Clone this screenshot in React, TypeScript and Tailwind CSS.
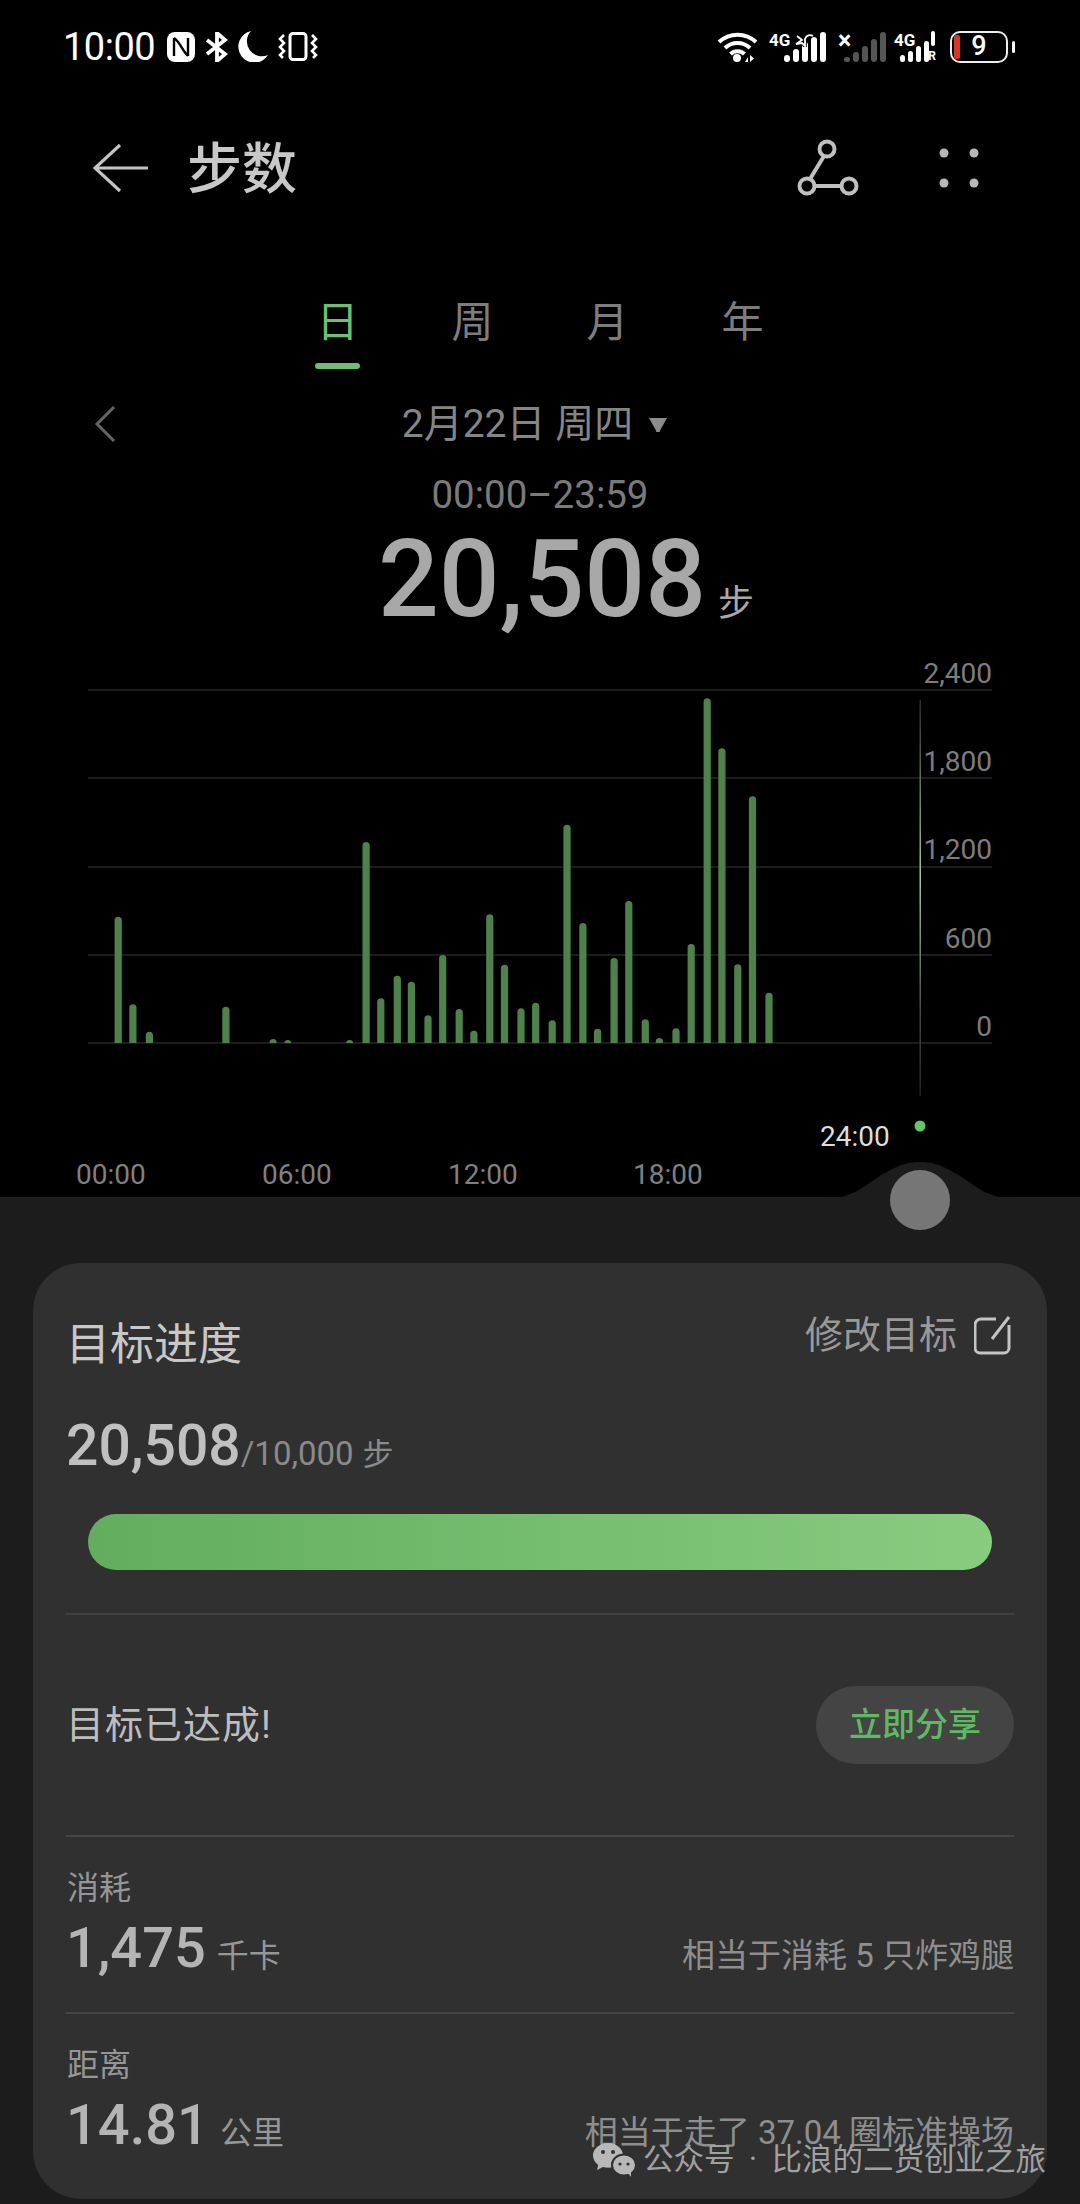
const bars: [number, number][] = [
  [118.2, 916.7], [132.9, 1004.3], [149.4, 1031.7], [225.9, 1006.7], [273.1, 1039], [287.8, 1040],
  [349.6, 1040], [366.1, 842], [380.8, 998.3], [397.3, 975.7], [411.4, 981.7], [428, 1015.3],
  [442.7, 955], [459.2, 1009], [473.9, 1030.7], [489.8, 914.3], [504.5, 964.7], [521, 1008.3],
  [535.7, 1002.7], [552.2, 1020.3], [567, 824.7], [582.9, 923], [597.6, 1028.7], [614.1, 958],
  [628.8, 901], [645.3, 1019.3], [659.4, 1038], [676, 1028.3], [691.2, 944], [707.2, 698.3],
  [721.9, 748.3], [737.8, 964.3], [752.5, 796.3], [769, 992.7],
];

const gridLines = [690, 778, 867, 955, 1043];
const yLabels: [string, number][] = [['2,400', 683], ['1,800', 771], ['1,200', 859], ['600', 948], ['0', 1036]];
const xLabels: [string, number][] = [['00:00', 76], ['06:00', 262], ['12:00', 448], ['18:00', 633]];

function StepChart() {
  return (
    <svg viewBox="0 640 1080 557" className="block h-[557px] w-[1080px] shrink-0">
      <defs>
        <linearGradient id="cursor" x1="0" y1="0" x2="0" y2="1">
          <stop offset="0" stopColor="#2a2a2a" />
          <stop offset="0.45" stopColor="#a6c4a2" />
          <stop offset="0.8" stopColor="#444444" />
          <stop offset="1" stopColor="#222222" />
        </linearGradient>
      </defs>
      {gridLines.map((y) => (
        <rect key={y} x="88" y={y - 0.75} width="904" height="1.5" fill="#262626" />
      ))}
      {bars.map(([x, top]) => (
        <path
          key={x}
          d={`M${x - 3.6} 1043 V${top + 3.6} A3.6 3.6 0 0 1 ${x + 3.6} ${top + 3.6} V1043 Z`}
          fill="#4f824b"
        />
      ))}
      <rect x="919.5" y="700" width="1.5" height="396" fill="url(#cursor)" />
      <circle cx="920" cy="1126" r="5.5" fill="#66c566" />
      {yLabels.map(([label, y]) => (
        <text key={label} x="992" y={y} textAnchor="end" fontSize="28" fill="#7d7d7d">
          {label}
        </text>
      ))}
      {xLabels.map(([label, x]) => (
        <text key={label} x={x} y="1184" fontSize="28" fill="#808080">
          {label}
        </text>
      ))}
      <text x="820" y="1146" fontSize="28" fill="#dddddd">
        24:00
      </text>
    </svg>
  );
}

function SignalBars({ color, heights, barWidth }: { color: string; heights: number[]; barWidth: number }) {
  return (
    <div className="flex h-[31px] items-end gap-[3px]">
      {heights.map((h, i) => (
        <span key={i} className="rounded-full" style={{ height: h, width: barWidth, backgroundColor: color }} />
      ))}
    </div>
  );
}

function StatusBar() {
  return (
    <div className="flex h-[92px] shrink-0 items-center justify-between pl-[63px] pr-[65px] pt-[1px] text-white">
      <div className="flex items-center">
        <span className="text-[38px] leading-none tracking-[-0.5px]">10:00</span>
        <svg viewBox="0 0 28 30" className="ml-[12px] h-[30px] w-[28px]">
          <rect width="28" height="30" rx="8" fill="#fff" />
          <path d="M7 6v18M21 6v18M7 6c6 4 8 12 14 18" fill="none" stroke="#000" strokeWidth="2.4" />
        </svg>
        <svg viewBox="0 0 24 30" className="ml-[10px] h-[30px] w-[24px]">
          <path d="M2 8 20 22 12 29V1L20 8 2 22" fill="none" stroke="#fff" strokeWidth="3.8" />
        </svg>
        <svg viewBox="0 0 30 31" className="ml-[9px] h-[31px] w-[30px]">
          <path d="M13 0A16 16 0 1 0 30 24 15 15 0 0 1 13 0Z" fill="#fff" />
        </svg>
        <svg viewBox="0 0 40 29" className="ml-[10px] h-[29px] w-[40px]">
          <rect x="12" y="1.5" width="16" height="26" rx="3" fill="none" stroke="#fff" strokeWidth="3" />
          <path
            d="M6 3 2 7l4 4-4 4 4 4-4 4 3 3M34 3l4 4-4 4 4 4-4 4 4 4-3 3"
            fill="none"
            stroke="#fff"
            strokeWidth="2.6"
          />
        </svg>
      </div>
      <div className="flex items-center">
        <svg viewBox="0 0 41 31" className="h-[31px] w-[41px]">
          <g fill="none" stroke="#fff" strokeWidth="4">
            <path d="M2 11A27 27 0 0 1 39 11" />
            <path d="M8 17A18 18 0 0 1 33 17" />
            <path d="M13.5 23A10 10 0 0 1 27.500 23" />
          </g>
          <circle cx="20" cy="27" r="4" fill="#fff" />
          <path d="M28 31l3-5v5zM33 24l4 3.5-4 3.5z" fill="#fff" />
        </svg>
        <div className="relative ml-[11px] h-[31px] w-[57px]">
          <span className="absolute left-0 top-[1px] text-[17px] font-bold leading-[17px]">4G</span>
          <div className="absolute bottom-0 right-0">
            <SignalBars color="#fff" heights={[7, 13, 20, 25, 30]} barWidth={6} />
          </div>
          <svg viewBox="0 0 20 16" className="absolute left-[25px] top-0 h-[16px] w-[20px]">
            <path d="M3 5 8 9 2 13l6-1 3 3V8c1-3 4-5 8-3" fill="#000" stroke="#000" strokeWidth="3.5" />
            <path d="M3 5 8 9 2 13l6-1 3 3V8c1-3 4-5 8-3" fill="none" stroke="#fff" strokeWidth="1.8" />
          </svg>
        </div>
        <div className="relative ml-[12px] h-[31px] w-[48px]">
          <span className="absolute left-0 top-[-3px] text-[25px] font-bold leading-[25px]">×</span>
          <div className="absolute bottom-0 right-0">
            <SignalBars color="#555555" heights={[5, 10, 16, 23, 30]} barWidth={6} />
          </div>
        </div>
        <div className="relative ml-[8px] h-[31px] w-[42px]">
          <span className="absolute left-0 top-[1px] text-[17px] font-bold leading-[17px]">4G</span>
          <div className="absolute bottom-0 left-[6px]">
            <SignalBars color="#fff" heights={[7, 11, 16, 21]} barWidth={5} />
          </div>
          <span className="absolute right-[1px] top-0 h-[15px] w-[4px] rounded-full bg-white" />
          <span className="absolute bottom-0 right-0 text-[12px] font-bold leading-[12px]">R</span>
        </div>
        <div className="relative ml-[14px] flex h-[32px] w-[58px] items-center justify-center rounded-[10px] border-[2.5px] border-[#eeeeee]">
          <span className="absolute bottom-[2px] left-[2px] top-[2px] w-[6px] rounded-[2px] bg-[#d8342c]" />
          <span className="text-[27px] font-medium leading-[27px]">9</span>
        </div>
        <span className="ml-[4px] h-[12px] w-[3px] rounded-full bg-white" />
      </div>
    </div>
  );
}

function Header() {
  return (
    <div className="flex h-[152px] shrink-0 items-center justify-between pl-[93px] pr-[100px] text-[#c8c8c8]">
      <div className="flex items-center gap-[38px]">
        <svg viewBox="0 0 56 50" className="h-[50px] w-[56px]">
          <path d="M55 25H3M27 2 2 25l25 23" fill="none" stroke="#c4c4c4" strokeWidth="3.2" />
        </svg>
        <h1 className="mt-[2px] text-[55px] font-medium leading-none">步数</h1>
      </div>
      <div className="flex items-center gap-[78px]">
        <svg viewBox="0 0 66 58" className="h-[58px] w-[66px]">
          <g fill="none" stroke="#c0c0c0" strokeWidth="4">
            <circle cx="33" cy="10" r="7.5" />
            <circle cx="13" cy="47" r="7.5" />
            <circle cx="55" cy="47" r="7.5" />
            <path d="M30 17 16 40M21 47h26" />
          </g>
        </svg>
        <svg viewBox="0 0 42 40" className="h-[40px] w-[42px]">
          <g fill="#b8b8b8">
            <circle cx="6" cy="5" r="4.5" />
            <circle cx="36" cy="5" r="4.5" />
            <circle cx="6" cy="35" r="4.5" />
            <circle cx="36" cy="35" r="4.5" />
          </g>
        </svg>
      </div>
    </div>
  );
}

const tabs = ['日', '周', '月', '年'];

function Tabs() {
  return (
    <div className="mt-[51px] flex shrink-0 justify-center">
      {tabs.map((tab, i) => (
        <div key={tab} className="flex w-[135px] flex-col items-center">
          <span className={`text-[42px] leading-[56px] ${i === 0 ? 'text-[#6cc070]' : 'text-[#7d7d7d]'}`}>{tab}</span>
          <span className={`mt-[12px] h-[6px] w-[45px] rounded-full ${i === 0 ? 'bg-[#6cc070]' : 'bg-transparent'}`} />
        </div>
      ))}
    </div>
  );
}

function DateSummary() {
  return (
    <>
      <div className="mt-[31px] grid h-[48px] shrink-0 grid-cols-[1fr_auto_1fr] items-center pl-[94px]">
        <svg viewBox="0 0 22 38" className="h-[38px] w-[22px]">
          <path d="M20 2 3 19l17 17" fill="none" stroke="#666666" strokeWidth="3" />
        </svg>
        <div className="flex items-center gap-[15px] pr-[104px] text-[39px] leading-none text-[#858585]">
          <span>2月22日 周四</span>
          <svg viewBox="0 0 20 15" className="h-[15px] w-[20px]">
            <path d="M1 1h18l-7 12.5a2 2 0 0 1-4 0Z" fill="#8c8c8c" />
          </svg>
        </div>
      </div>
      <div className="mt-[27px] h-[40px] shrink-0 text-center text-[38.5px] leading-[40px] text-[#7a7a7a]">00:00–23:59</div>
      <div className="mt-[5px] flex h-[120px] shrink-0 items-baseline justify-center gap-[12px] pl-[52px] text-[#a8a8a8]">
        <span className="text-[107px] font-medium leading-[120px]">20,508</span>
        <span className="text-[36px] leading-none">步</span>
      </div>
    </>
  );
}

function Metric({ label, value, unit, note }: { label: string; value: string; unit: string; note: string }) {
  return (
    <>
      <div className="mt-[31px] pl-[1px] text-[32px] leading-[40px] text-[#969696]">{label}</div>
      <div className="mt-[5px] flex h-[70px] items-baseline justify-between">
        <div className="flex items-baseline gap-[11px]">
          <span className="text-[56px] font-medium leading-[70px] text-[#b4b4b4]">{value}</span>
          <span className="text-[32px] leading-none text-[#969696]">{unit}</span>
        </div>
        <span className="text-[33px] leading-none text-[#8e8e8e]">{note}</span>
      </div>
    </>
  );
}

function GoalCard() {
  return (
    <div className="relative mx-[33px] mt-[66px] h-[936px] rounded-[48px] bg-[#303030] px-[33px] pt-[47px]">
      <div className="flex items-start justify-between">
        <h2 className="text-[44px] leading-[70px] text-[#c8c8c8]">目标进度</h2>
        <div className="flex items-center gap-[17px] text-[38px] leading-[50px] text-[#999999]">
          <span>修改目标</span>
          <svg viewBox="2 0 40 40" className="h-[40px] w-[40px]">
            <path
              d="M24 4H9a6 6 0 0 0-6 6v23a5 5 0 0 0 5 5h24a5 5 0 0 0 5-5V10"
              fill="none"
              stroke="#c4c4c4"
              strokeWidth="3"
            />
            <path d="M20 24 37 2" fill="none" stroke="#c4c4c4" strokeWidth="3" />
          </svg>
        </div>
      </div>
      <div className="mt-[26px] flex h-[80px] items-baseline text-[#8a8a8a]">
        <span className="text-[57px] font-medium leading-[80px] text-[#c0c0c0]">20,508</span>
        <span className="text-[33px]">/10,000</span>
        <span className="ml-[9px] text-[31px]">步</span>
      </div>
      <div className="mx-[22px] mt-[28px] h-[56px] rounded-full bg-gradient-to-r from-[#62ad5e] to-[#88cc80]" />
      <div className="mt-[43px] h-[2px] bg-[#414141]" />
      <div className="flex h-[220px] items-center justify-between">
        <span className="text-[38px] leading-none tracking-[1px] text-[#bdbdbd]">目标已达成!</span>
        <span className="flex h-[78px] w-[198px] items-center justify-center rounded-full bg-[#444444] text-[33px] font-medium text-[#5fb862]">
          立即分享
        </span>
      </div>
      <div className="h-[2px] bg-[#454545]" />
      <Metric label="消耗" value="1,475" unit="千卡" note="相当于消耗 5 只炸鸡腿" />
      <div className="mt-[29px] h-[2px] bg-[#454545]" />
      <Metric label="距离" value="14.81" unit="公里" note="相当于走了 37.04 圈标准操场" />
      <div className="absolute left-[560px] top-[880px] flex items-center gap-[8px] whitespace-nowrap text-[30.5px] leading-[34px] text-[#a0a0a0] [word-spacing:7px]">
        <svg viewBox="0 0 42 34" className="h-[34px] w-[42px] shrink-0">
          <path d="M15 0C6.700 0 0 5.600 0 12.500c0 3.800 2 7.100 5.200 9.400L4 27l6-3a18 18 0 0 0 5 .7C23.300 24.700 30 19.300 30 12.500S23.300 0 15 0Z" fill="#b8b8b8" />
          <ellipse cx="31" cy="22" rx="12" ry="10.500" fill="#b8b8b8" stroke="#303030" strokeWidth="2" />
          <path d="m35 30 3 4v-6z" fill="#b8b8b8" />
          <g fill="#303030">
            <circle cx="10" cy="9" r="2" />
            <circle cx="20" cy="9" r="2" />
            <circle cx="27" cy="21" r="1.600" />
            <circle cx="35" cy="21" r="1.600" />
          </g>
        </svg>
        <span>公众号 · 比浪的二货创业之旅</span>
      </div>
    </div>
  );
}

export default function App() {
  return (
    <div className="flex h-[2204px] w-[1080px] flex-col overflow-hidden bg-black [font-family:Roboto,'Noto_Sans_CJK_SC',sans-serif]">
      <StatusBar />
      <Header />
      <Tabs />
      <DateSummary />
      <StepChart />
      {/* bottom sheet with the scrubber bump */}
      <div className="relative flex-1 bg-[#1c1c1c]">
        <svg viewBox="0 0 180 37" className="absolute left-[830px] top-[-36px] h-[37px] w-[180px]">
          <path d="M0 37C25 37 40 20 55 12 70 3 80 1 90 1c10 0 20 2 35 11 15 8 30 25 55 25Z" fill="#1c1c1c" />
        </svg>
        <span className="absolute left-[890px] top-[-27px] h-[60px] w-[60px] rounded-full bg-[#767676]" />
        <GoalCard />
      </div>
    </div>
  );
}
